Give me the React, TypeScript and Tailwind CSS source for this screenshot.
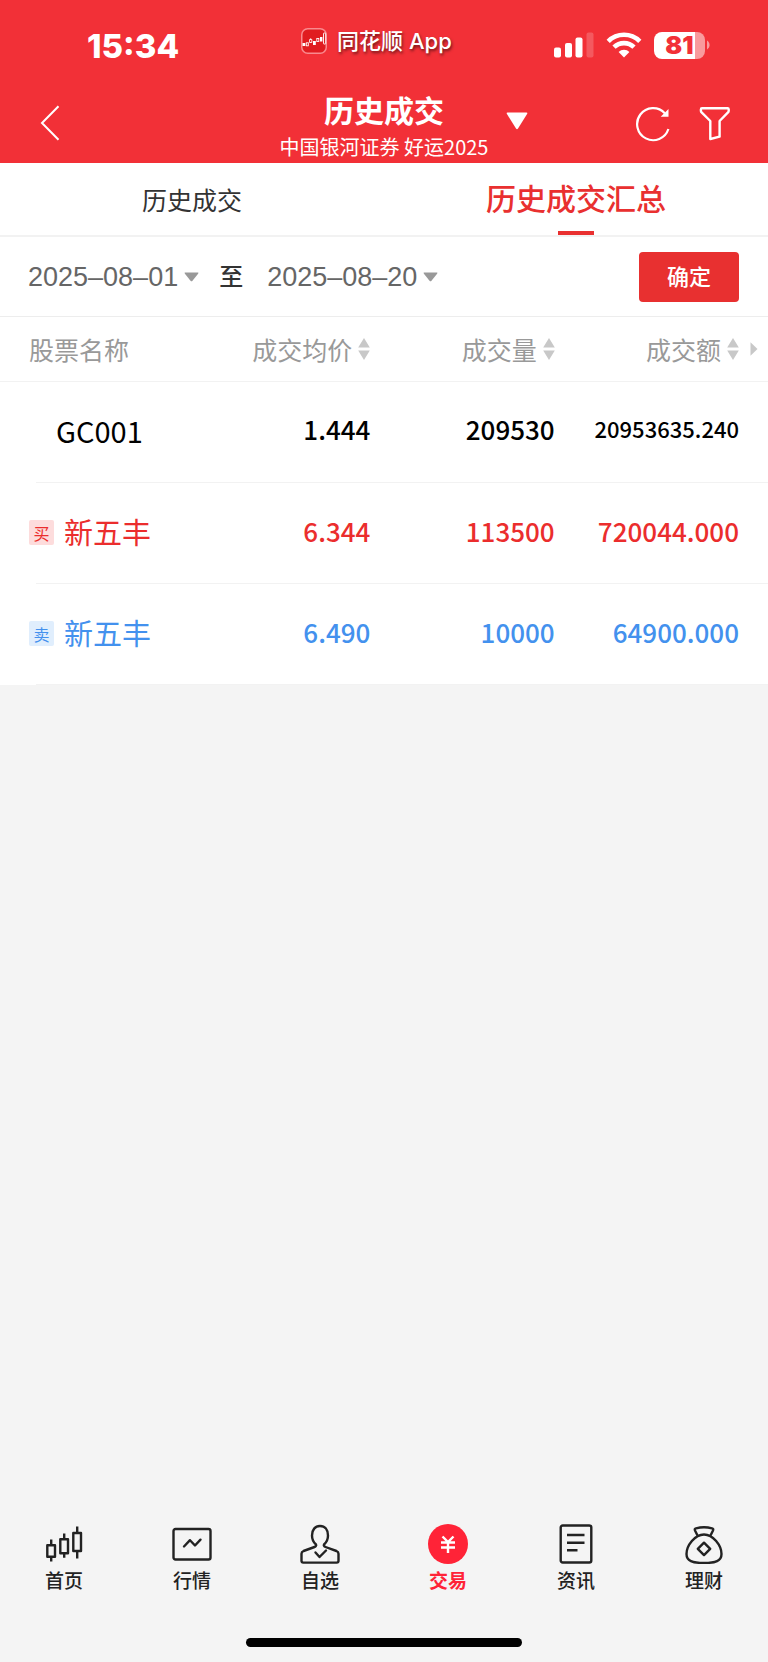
import type { ReactNode } from 'react';

type Side = 'buy' | 'sell' | null;

interface Deal {
  id: string;
  name: string;
  side: Side;
  price: string;
  volume: string;
  amount: string;
}

const DEALS: Deal[] = [
  { id: 'gc001', name: 'GC001', side: null, price: '1.444', volume: '209530', amount: '20953635.240' },
  { id: 'xwf-buy', name: '新五丰', side: 'buy', price: '6.344', volume: '113500', amount: '720044.000' },
  { id: 'xwf-sell', name: '新五丰', side: 'sell', price: '6.490', volume: '10000', amount: '64900.000' },
];

const COLUMNS = ['成交均价', '成交量', '成交额'];

function StatusBar() {
  return (
    <div className="flex h-[86px] items-center pl-[87px] pr-[57px] font-['Inter','Noto_Sans_CJK_SC',sans-serif]">
      <span className="mt-1.5 text-[33px] leading-8 font-extrabold">15:34</span>
      <div className="mb-1 ml-[122px] flex items-center gap-2.5">
        <svg width="26" height="26" viewBox="0 0 26 26" aria-hidden="true">
          <rect x="0.75" y="0.75" width="24.5" height="24.5" rx="6" fill="#e01c20" stroke="#f98a8e" strokeWidth="1.5" />
          <g fill="#fff">
            <rect x="1.5" y="15" width="2.8" height="3" />
            <rect x="12" y="13" width="2.8" height="4" />
            <rect x="19" y="9" width="2.4" height="4.5" />
          </g>
          <g fill="none" stroke="#fff" strokeWidth="0.9">
            <rect x="5.3" y="14.8" width="2" height="3" />
            <path d="M8.6 11.5h2.2v3H8.6zM9.7 10.3v1.2" />
            <rect x="15.8" y="10.5" width="2" height="3" />
            <rect x="22.5" y="5" width="2.2" height="11" rx="0.5" />
          </g>
        </svg>
        <span className="text-[22px] leading-7 font-medium [text-shadow:1px_2px_3px_rgba(0,0,0,0.55)]">同花顺 App</span>
      </div>
      <div className="mt-1 ml-auto flex items-center">
        <svg width="40" height="26" viewBox="0 0 40 26" fill="#fff" aria-hidden="true">
          <rect x="0" y="15.5" width="7" height="10" rx="2" />
          <rect x="11" y="11" width="7" height="14.5" rx="2" />
          <rect x="21.5" y="5.5" width="7" height="20" rx="2" />
          <rect x="32.5" y="0.5" width="7" height="25" rx="2" opacity="0.2" />
        </svg>
        <svg className="ml-3" width="36" height="26" viewBox="0 0 36 26" aria-hidden="true">
          <g fill="none" stroke="#fff" strokeWidth="4.6">
            <path d="M2.2 9.3a22.5 22.5 0 0 1 31.6 0" />
            <path d="M8 15.2a14.2 14.2 0 0 1 20 0" />
          </g>
          <path d="M18 25.5l-5.4-5.6a7.7 7.7 0 0 1 10.8 0z" fill="#fff" />
        </svg>
        <div className="ml-3 flex h-[27px] w-[51px] items-center justify-center rounded-lg bg-[linear-gradient(to_right,#fff_81%,#f99a9d_81%)] text-[25px] leading-7 font-black text-[#f23037]">
          81
        </div>
        <svg className="ml-0.5" width="4" height="10" viewBox="0 0 4 10" aria-hidden="true">
          <path d="M0 0.5a5.2 5.2 0 0 1 0 9z" fill="#f99a9d" />
        </svg>
      </div>
    </div>
  );
}

function TitleBar() {
  return (
    <div className="grid h-[77px] grid-cols-[1fr_auto_1fr] items-center">
      <button type="button" aria-label="返回" className="mb-1 ml-10 justify-self-start">
        <svg width="20" height="36" viewBox="0 0 20 36" fill="none" stroke="#fff" strokeWidth="2" aria-hidden="true">
          <path d="M18.5 1.3L2 18l16.5 16.7" />
        </svg>
      </button>
      <div className="pt-1 text-center">
        <h1 className="text-[30px] leading-9 font-bold">历史成交</h1>
        <p className="mt-1 text-xl leading-8">中国银河证券 好运2025</p>
      </div>
      <div className="flex items-center pl-[18px] pr-[37px]">
        <button type="button" aria-label="切换账户" className="mb-2">
          <svg width="22" height="18" viewBox="0 0 22 18" fill="#fff" aria-hidden="true">
            <path d="M1.5 0.5h19q1.3 0 0.7 1.3L12 16.5q-1 1.4-2 0L0.8 1.8Q0.2 0.5 1.5 0.5z" />
          </svg>
        </button>
        <button type="button" aria-label="刷新" className="mb-0.5 ml-auto">
          <svg width="36" height="36" viewBox="0 0 36 36" fill="none" stroke="#fff" strokeWidth="2.2" aria-hidden="true">
            <path d="M33.4 23a16 16 0 1 1-3.6-15.8" />
            <path d="M33.5 3v7.8h-7.8z" fill="#fff" stroke="none" />
          </svg>
        </button>
        <button type="button" aria-label="筛选" className="mb-0.5 ml-7">
          <svg width="32" height="36" viewBox="0 0 32 36" fill="none" stroke="#fff" strokeWidth="2.4" strokeLinejoin="round" aria-hidden="true">
            <path d="M3 2.2h25.5q1.2 0 1.2 1.2v1.3q0 1-0.7 1.7L20.6 15v15.7L11.3 33V15L2.6 6.4q-0.7-0.7-0.7-1.7V3.4q0-1.2 1.1-1.2z" />
          </svg>
        </button>
      </div>
    </div>
  );
}

function DateButton({ date, label }: { date: string; label: string }) {
  return (
    <button type="button" aria-label={`${label} ${date}`} className="flex items-center gap-1.5">
      <span className="text-[27px] leading-8 text-[#666] font-['Liberation_Sans',sans-serif]">{date}</span>
      <svg width="15" height="10" viewBox="0 0 15 10" fill="#999" aria-hidden="true">
        <path d="M1.2 0.5h12.6q1.2 0 0.3 1.2L8.5 8.8q-1 1-2 0L0.9 1.7Q0 0.5 1.2 0.5z" />
      </svg>
    </button>
  );
}

function SortIcon() {
  return (
    <svg width="12" height="22" viewBox="0 0 12 22" fill="#c8c8c8" aria-hidden="true">
      <path d="M6 0l5.8 9.5H0.2zM6 22l5.8-9.5H0.2z" />
    </svg>
  );
}

const SIDE_TEXT = {
  buy: 'text-[#eb2d2d]',
  sell: 'text-[#4391ee]',
};

const SIDE_BADGE = {
  buy: 'bg-[#fddcdc]',
  sell: 'bg-[#e0eefd]',
};

function DealRow({ deal }: { deal: Deal }) {
  const color = deal.side ? SIDE_TEXT[deal.side] : 'text-black';
  // long amounts drop a size so they stay inside the column
  const amountSize = deal.amount.length > 10 ? 'text-[22px]' : 'text-[26px]';

  return (
    <tr className={color}>
      <td className="p-0">
        <div className="ml-9 flex h-[101px] items-center border-b border-[#f2f2f2] pb-1">
          {deal.side ? (
            <div className="-ml-[7px] flex items-center gap-2.5">
              <span className={`mt-1 flex size-[25px] items-center justify-center rounded-xs text-base leading-6 ${SIDE_BADGE[deal.side]}`}>
                {deal.side === 'buy' ? '买' : '卖'}
              </span>
              <span className="text-[29px] leading-8 whitespace-nowrap">{deal.name}</span>
            </div>
          ) : (
            <span className="ml-5 text-[29px] leading-8">{deal.name}</span>
          )}
        </div>
      </td>
      <td className="border-b border-[#f2f2f2] p-0 pb-1.5 text-right text-[26px] font-medium">{deal.price}</td>
      <td className="border-b border-[#f2f2f2] p-0 pb-1.5 text-right text-[26px] font-medium">{deal.volume}</td>
      <td className={`border-b border-[#f2f2f2] p-0 pb-1.5 text-right font-medium ${amountSize}`}>{deal.amount}</td>
      <td className="border-b border-[#f2f2f2] p-0" />
    </tr>
  );
}

function DealTable() {
  return (
    <table className="w-full table-fixed border-collapse bg-white">
      <thead>
        <tr className="h-16 border-b border-[#f2f2f2] text-[25px] leading-8 text-[#999]">
          <th className="p-0 pl-[29px] text-left font-normal">股票名称</th>
          {COLUMNS.map((column) => (
            <th key={column} className="w-[24%] p-0 font-normal">
              <button type="button" className="ml-auto flex items-center gap-1.5">
                {column}
                <SortIcon />
              </button>
            </th>
          ))}
          <th className="w-[29px] p-0 pl-[11px]">
            <svg width="8" height="14" viewBox="0 0 8 14" fill="#c8c8c8" aria-hidden="true">
              <path d="M0.5 0.3L7.5 7L0.5 13.7z" />
            </svg>
          </th>
        </tr>
      </thead>
      <tbody>
        {DEALS.map((deal) => (
          <DealRow key={deal.id} deal={deal} />
        ))}
      </tbody>
    </table>
  );
}

function NavIcon({ children }: { children: ReactNode }) {
  return (
    <svg width="40" height="40" viewBox="0 0 40 40" fill="none" stroke="#222" strokeWidth="2.4" strokeLinejoin="round" aria-hidden="true">
      {children}
    </svg>
  );
}

const NAV_ITEMS = [
  {
    label: '首页',
    active: false,
    icon: (
      <NavIcon>
        <rect x="3.3" y="21.3" width="7.7" height="11.5" />
        <path d="M7.2 15.5v5.8M7.2 32.8v4.7" />
        <rect x="16.3" y="15.3" width="7.7" height="14" />
        <path d="M20.2 9.5v5.8M20.2 29.3v4.5" />
        <rect x="29.3" y="9" width="7.7" height="18" />
        <path d="M33.2 2.5V9M33.2 27v7.5" />
      </NavIcon>
    ),
  },
  {
    label: '行情',
    active: false,
    icon: (
      <NavIcon>
        <rect x="1.5" y="5" width="37" height="30.5" rx="2" />
        <path d="M12 22.5l6-6.3 5 5.3 5.5-5.8" strokeLinecap="round" />
      </NavIcon>
    ),
  },
  {
    label: '自选',
    active: false,
    icon: (
      <NavIcon>
        <path d="M16 20.5c-2.3-2-4-5.2-4-9C12 5.8 15 2 20 2s8 3.8 8 9.5c0 3.8-1.7 7-4 9-0.6 1 0.2 2 1.5 2.5l11 4q2 0.8 2 2.8v7q0 1.8-1.8 1.8H3.3q-1.8 0-1.8-1.8v-7q0-2 2-2.8l11-4c1.3-0.5 2.1-1.5 1.5-2.5z" />
        <path d="M15.5 28.5l4 4.5 6.5-6.5" strokeLinecap="round" />
      </NavIcon>
    ),
  },
  {
    label: '交易',
    active: true,
    icon: (
      <NavIcon>
        <circle cx="20" cy="20" r="20" fill="#ff2337" stroke="none" />
        <path d="M14.5 12.5l5.5 5.5 5.5-5.5M13 18.5h14M13 23.5h14M20 18v11" stroke="#fff" strokeLinejoin="miter" />
      </NavIcon>
    ),
  },
  {
    label: '资讯',
    active: false,
    icon: (
      <NavIcon>
        <rect x="4.7" y="1.5" width="30.6" height="37" rx="2" />
        <path d="M11 11h17.5M11 18.7h17.5M11 26.3h10.5" />
      </NavIcon>
    ),
  },
  {
    label: '理财',
    active: false,
    icon: (
      <NavIcon>
        <path d="M13.5 11.5L11 6.5q-0.8-1.7 1-2.2 8-2 16 0 1.8 0.5 1 2.2l-2.5 5" />
        <path d="M20 10.5c9 0 17.5 11 17.5 19.5 0 7-6 9-17.5 9S2.5 37 2.5 30C2.5 21.5 11 10.5 20 10.5z" />
        <path d="M20 18.7l6.2 6.2-6.2 6.2-6.2-6.2z" />
      </NavIcon>
    ),
  },
];

function BottomNav() {
  return (
    <nav className="mt-auto grid grid-cols-6">
      {NAV_ITEMS.map((item) => (
        <a
          key={item.label}
          href="#"
          aria-current={item.active ? 'page' : undefined}
          className={`flex flex-col items-center gap-1 text-[19px] leading-6 ${item.active ? 'font-bold text-[#ff2337]' : 'font-medium text-[#222]'}`}
        >
          {item.icon}
          {item.label}
        </a>
      ))}
    </nav>
  );
}

export default function App() {
  return (
    <div className="flex min-h-screen flex-col bg-[#f4f4f4] font-['Noto_Sans_CJK_SC',sans-serif]">
      <header className="bg-[#f23037] text-white">
        <StatusBar />
        <TitleBar />
      </header>

      <div role="tablist" className="grid h-[74px] grid-cols-2 border-b-2 border-[#f2f2f2] bg-white">
        <button type="button" role="tab" aria-selected="false" className="text-[25px] leading-9 text-[#333]">
          历史成交
        </button>
        <button type="button" role="tab" aria-selected="true" className="flex flex-col items-center text-[30px] leading-9 font-medium text-[#e93030]">
          <span className="my-auto">历史成交汇总</span>
          <span className="h-1 w-9 bg-[#e93030]" />
        </button>
      </div>

      <div className="flex h-20 items-center border-b border-[#ededed] bg-white pr-[29px] pl-7">
        <DateButton date="2025–08–01" label="开始日期" />
        <span className="mr-6 mb-1 ml-5 text-2xl leading-8 font-medium text-[#333]">至</span>
        <DateButton date="2025–08–20" label="结束日期" />
        <button type="button" className="ml-auto h-[50px] w-[100px] rounded bg-[#e83030] pb-1 text-[22px] leading-8 font-medium text-white">
          确定
        </button>
      </div>

      <DealTable />

      <BottomNav />
      <div className="mx-auto mt-[46px] mb-[15px] h-[9px] w-[36%] rounded-full bg-black" />
    </div>
  );
}
